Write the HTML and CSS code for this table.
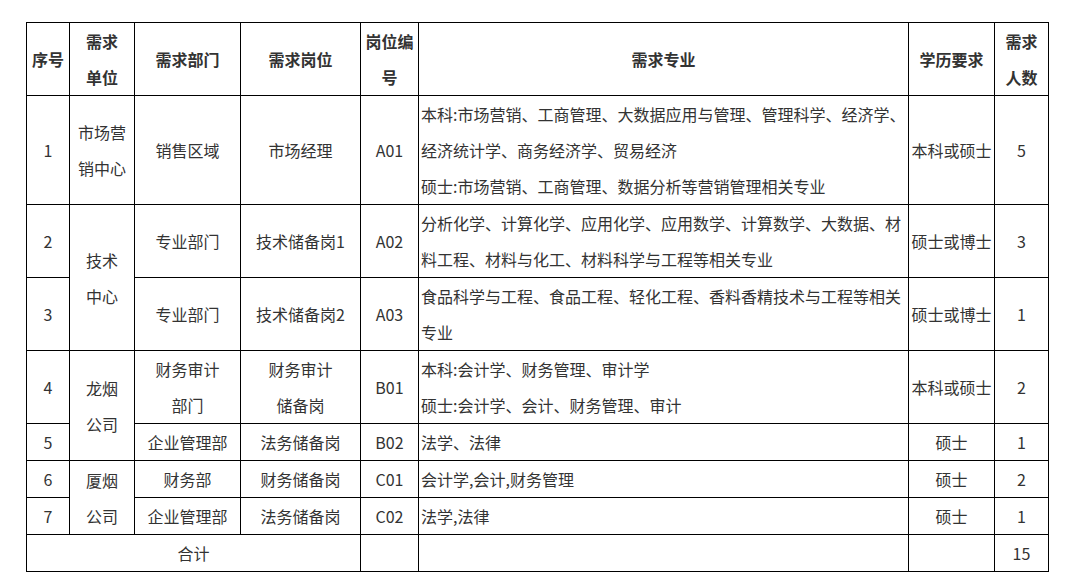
FILE: index.html
```html
<!DOCTYPE html>
<html lang="zh-CN">
<head>
<meta charset="utf-8">
<title>招聘需求表</title>
<link rel="stylesheet" href="styles.css">
</head>
<body>
<div class="page">
<table class="jobs">
  <colgroup>
    <col class="c-no">
    <col class="c-unit">
    <col class="c-dept">
    <col class="c-post">
    <col class="c-code">
    <col class="c-major">
    <col class="c-edu">
    <col class="c-num">
  </colgroup>
  <thead>
    <tr>
      <th>序号</th>
      <th>需求<br>单位</th>
      <th>需求部门</th>
      <th>需求岗位</th>
      <th>岗位编<br>号</th>
      <th>需求专业</th>
      <th>学历要求</th>
      <th>需求<br>人数</th>
    </tr>
  </thead>
  <tbody>
    <tr>
      <td>1</td>
      <td>市场营<br>销中心</td>
      <td>销售区域</td>
      <td>市场经理</td>
      <td>A01</td>
      <td class="major">本科:市场营销、工商管理、大数据应用与管理、管理科学、经济学、<br>经济统计学、商务经济学、贸易经济<br>硕士:市场营销、工商管理、数据分析等营销管理相关专业</td>
      <td>本科或硕士</td>
      <td>5</td>
    </tr>
    <tr>
      <td>2</td>
      <td rowspan="2">技术<br>中心</td>
      <td>专业部门</td>
      <td>技术储备岗1</td>
      <td>A02</td>
      <td class="major">分析化学、计算化学、应用化学、应用数学、计算数学、大数据、材<br>料工程、材料与化工、材料科学与工程等相关专业</td>
      <td>硕士或博士</td>
      <td>3</td>
    </tr>
    <tr>
      <td>3</td>
      <td>专业部门</td>
      <td>技术储备岗2</td>
      <td>A03</td>
      <td class="major">食品科学与工程、食品工程、轻化工程、香料香精技术与工程等相关<br>专业</td>
      <td>硕士或博士</td>
      <td>1</td>
    </tr>
    <tr>
      <td>4</td>
      <td rowspan="2">龙烟<br>公司</td>
      <td>财务审计<br>部门</td>
      <td>财务审计<br>储备岗</td>
      <td>B01</td>
      <td class="major">本科:会计学、财务管理、审计学<br>硕士:会计学、会计、财务管理、审计</td>
      <td>本科或硕士</td>
      <td>2</td>
    </tr>
    <tr>
      <td>5</td>
      <td>企业管理部</td>
      <td>法务储备岗</td>
      <td>B02</td>
      <td class="major">法学、法律</td>
      <td>硕士</td>
      <td>1</td>
    </tr>
    <tr>
      <td>6</td>
      <td rowspan="2">厦烟<br>公司</td>
      <td>财务部</td>
      <td>财务储备岗</td>
      <td>C01</td>
      <td class="major">会计学,会计,财务管理</td>
      <td>硕士</td>
      <td>2</td>
    </tr>
    <tr>
      <td>7</td>
      <td>企业管理部</td>
      <td>法务储备岗</td>
      <td>C02</td>
      <td class="major">法学,法律</td>
      <td>硕士</td>
      <td>1</td>
    </tr>
    <tr>
      <td colspan="4">合计</td>
      <td></td>
      <td></td>
      <td></td>
      <td>15</td>
    </tr>
  </tbody>
</table>
</div>
</body>
</html>
```

FILE: styles.css
```css
html, body {
  margin: 0;
  padding: 0;
  background: #ffffff;
}

.page {
  padding: 22px 0 0 26px;
}

.jobs {
  border-collapse: collapse;
  table-layout: fixed;
  width: 1023px;
  font-family: "Noto Sans CJK SC", "Noto Sans", sans-serif;
  font-size: 16px;
  color: #333333;
}

.c-no { width: 43px; }
.c-unit { width: 65px; }
.c-dept { width: 106px; }
.c-post { width: 120px; }
.c-code { width: 58px; }
.c-major { width: 490px; }
.c-edu { width: 86px; }
.c-num { width: 54px; }

.jobs th,
.jobs td {
  border: 1px solid #000000;
  padding: 0;
  line-height: 36px;
  text-align: center;
  vertical-align: middle;
  white-space: nowrap;
  overflow: hidden;
}

.jobs th {
  font-weight: bold;
}

.jobs td.major {
  text-align: left;
  padding-left: 2px;
}
```
